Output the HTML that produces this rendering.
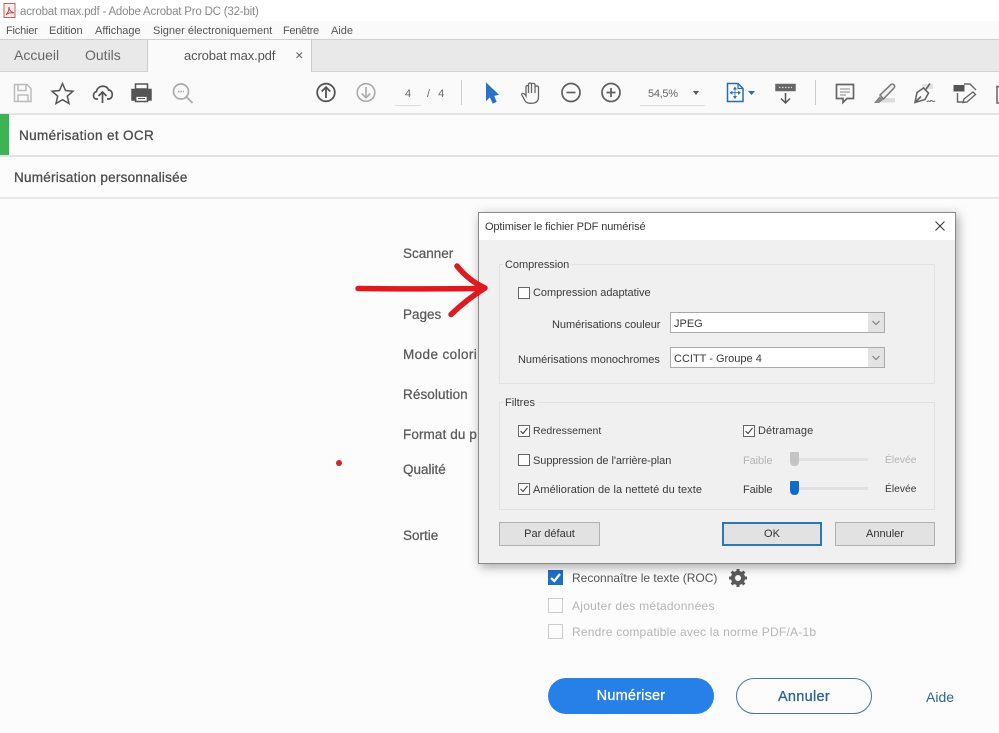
<!DOCTYPE html>
<html><head><meta charset="utf-8"><style>
html,body{margin:0;padding:0;width:999px;height:733px;overflow:hidden;background:#fcfcfc}
body{position:relative;font-family:"Liberation Sans",sans-serif;color:#444}
.a{position:absolute}
.t{position:absolute;white-space:nowrap;line-height:16px;height:16px}
.m{font-size:11px;color:#555;top:23px}
.d{font-size:11px;color:#3a3a3a}
.l{font-size:13.500px;color:#5a5a5a;left:403px;-webkit-text-stroke:.25px #5a5a5a}
.cb{position:absolute;width:10px;height:10px;border:1px solid #666;background:#fdfdfd}
.sel{position:absolute;left:670px;width:213px;height:19px;border:1px solid #aaa;background:#fff}
.sel i{position:absolute;right:0;top:0;width:16px;height:19px;background:#e3e3e3}
.btn{position:absolute;top:522px;height:22px;width:99px;border:1px solid #b0b0b0;background:#e2e2e2;text-align:center;line-height:23px;font-size:11px;color:#333}
.s{font-size:13.500px;color:#4d4d4d;-webkit-text-stroke:.3px #4d4d4d;letter-spacing:.2px}
</style></head><body>
<!-- title bar -->
<div class="a" style="left:0;top:0;width:999px;height:21px;background:#fff"></div>
<svg class="a" style="left:3px;top:3px" width="13" height="15" viewBox="0 0 13 15"><path d="M1 .5H12V14.500H1Z" fill="#fbeeee" stroke="#c8605c"/><path d="M3 12C5 10 6 7 6 4C6 7 8 9 11 10C8 9.500 5 10 3 12Z" fill="none" stroke="#c0403c"/></svg>
<div class="t" style="left:20px;top:4px;font-size:11.500px;color:#8a8a8a;letter-spacing:-.2px">acrobat max.pdf - Adobe Acrobat Pro DC (32-bit)</div>
<!-- menu -->
<div class="a" style="left:0;top:21px;width:999px;height:18px;background:#fafafa"></div>
<div class="t m" style="left:6px;letter-spacing:-.2px">Fichier</div>
<div class="t m" style="left:49px">Edition</div>
<div class="t m" style="left:95px">Affichage</div>
<div class="t m" style="left:153px">Signer électroniquement</div>
<div class="t m" style="left:283px;letter-spacing:-.3px">Fenêtre</div>
<div class="t m" style="left:331px">Aide</div>
<!-- tabs -->
<div class="a" style="left:0;top:39px;width:999px;height:33px;background:#e9e9e9;border-top:1px solid #cfcfcf;border-bottom:1px solid #d2d2d2;box-sizing:border-box"></div>
<div class="a" style="left:147px;top:40px;width:163px;height:32px;background:#fafafa;border-left:1px solid #ccc;border-right:1px solid #ccc"></div>
<div class="t" style="left:14px;top:47px;font-size:14px;color:#666">Accueil</div>
<div class="t" style="left:85px;top:47px;font-size:14px;color:#666">Outils</div>
<div class="t" style="left:184px;top:48px;font-size:13px;color:#555;letter-spacing:-.13px">acrobat max.pdf</div>
<svg class="a" style="left:295px;top:51px" width="9" height="9"><path d="M1.500 1.500L7 7M7 1.500L1.500 7" stroke="#666" stroke-width="1.100"/></svg>
<!-- toolbar -->
<div class="a" style="left:0;top:72px;width:999px;height:41px;background:#fafafa"></div>
<div class="a" style="left:0;top:113px;width:999px;height:2px;background:#e4e4e4"></div>
<svg class="a" style="left:0;top:72px" width="999" height="41" fill="none" stroke="#666" stroke-width="1.500">
<!-- save -->
<g stroke="#bbb"><path d="M14.500 12.500H27L31 16.500V29.500H14.500Z"/><path d="M18 12.500V18.500H26V12.500M18 29.500V23H28V29.500"/></g>
<!-- star -->
<path d="M62.500 11.500L65.500 18.500L73 19.200L67.300 24.200L69 31.500L62.500 27.700L56 31.500L57.700 24.200L52 19.200L59.500 18.500Z" stroke="#555"/>
<!-- cloud -->
<path d="M98 27H96.500C92.500 27 92.500 20.500 96.500 19.500C97.500 13 107 12.500 108.500 18C113.500 18 113.500 27 108.500 27H107M102.500 31V20M98.500 24L102.500 20L106.500 24" stroke="#555" stroke-width="1.700"/>
<!-- print -->
<path d="M135.500 12H147.500V17H135.500Z" stroke="#555"/><path d="M132 17.500H151V28H147.500V24H135.500V28H132Z" fill="#555" stroke="#555"/><path d="M135.500 24H147.500V29.500H135.500Z" stroke="#555"/><path d="M138 26.500H145" stroke="#555" stroke-width="1"/>
<!-- search -->
<g stroke="#aaa" stroke-width="1.700"><circle cx="181" cy="19.500" r="7.500"/><path d="M186.500 25L192.500 31"/><path d="M178 19.500H184" stroke-dasharray="1.500 1"/></g>
<!-- up/down -->
<g stroke="#555" stroke-width="1.800"><circle cx="326" cy="20.500" r="8.800"/><path d="M326 26V15.500M321.700 19.500L326 15.200L330.300 19.500"/></g>
<g stroke="#aaa" stroke-width="1.600"><circle cx="366" cy="20.500" r="8.800"/><path d="M366 15V25.500M361.700 21.500L366 25.800L370.300 21.500"/></g>
<path d="M395 33.500H421" stroke="#ddd" stroke-width="1"/>
<path d="M461.500 8V33" stroke="#ccc" stroke-width="1"/>
<!-- cursor -->
<path d="M486.500 11.500V28L490 24.500L493 31L496 29.500L493.500 23.500L498 22.500Z" fill="#2a72c4" stroke="#2a72c4" stroke-width="1"/>
<!-- hand -->
<path d="M526 30C524 28 524 26 522 23.500C521 21.500 523 20.500 525 22.500L526 24V15C526 13 528.500 13 528.500 15V21V12.500C528.500 10.500 531.500 10.500 531.500 12.500V21V12.500C531.500 11 535 11 535 12.500V21V15C535 13.500 538.500 13.500 538.500 15.500V25C538.500 29 536.500 30.500 534 31C531 31.500 528 31.500 526 30Z" stroke="#666" stroke-width="1.300"/>
<!-- minus/plus -->
<g stroke="#5f5f5f" stroke-width="1.700"><circle cx="571" cy="20.500" r="9"/><path d="M566.500 20.500H575.500"/><circle cx="611" cy="20.500" r="9"/><path d="M606.500 20.500H615.500M611 16V25"/></g>
<path d="M640 33.500H705" stroke="#ddd" stroke-width="1"/>
<path d="M693 19H699L696 23Z" fill="#555" stroke="none"/>
<!-- fit -->
<path d="M727.500 11.500H738L743 16.500V29.500H727.500Z" stroke="#2a6cb0" stroke-width="1.500"/><path d="M738 11.500V16.500H743" stroke="#2a6cb0" stroke-width="1.200"/>
<path d="M735 14.500L737 17.500H733ZM735 27L737 24H733ZM729.500 20.700L732.500 18.700V22.700ZM741 20.700L738 18.700V22.700Z" fill="#2a6cb0" stroke="none"/>
<path d="M735 17.500V24M732.500 20.700H738" stroke="#2a6cb0" stroke-width=".8"/>
<path d="M748 19H755L751.500 23Z" fill="#2a6cb0" stroke="none"/>
<!-- stamp -->
<path d="M776 12.500H795V18.500H776Z" fill="#666" stroke="#666"/><path d="M779 15.500H792" stroke="#ddd" stroke-width="1.300" stroke-dasharray="1.500 1.500"/><path d="M785.500 21V30.500M781 26.500L785.500 31L790 26.500" stroke="#555"/>
<path d="M815.500 8V33" stroke="#ccc" stroke-width="1"/>
<!-- comment -->
<path d="M836.500 12.500H853.500V26.500H847L843 30.500V26.500H836.500Z" stroke="#666" stroke-width="1.700"/><path d="M840 17H850M840 20H850M840 23H846" stroke="#888" stroke-width="1"/>
<!-- highlight -->
<path d="M881 26H895V30.500H881Z" fill="#ddd" stroke="none"/><path d="M880 23L891 12.500C893 11 896 14 894 16L883.500 27Z" stroke="#777" fill="#f0f0f0"/><path d="M875 30.500L879.500 25L882.500 27.500L879 30.500Z" fill="#888" stroke="#888" stroke-width="1"/>
<!-- sign -->
<path d="M922 12H933V17H922Z" fill="#e3e3e3" stroke="none"/><path d="M915 30.500L917 20.500L923.500 16L928.500 21L925 27.500ZM930 11.500L925.500 18M915.500 30L921 24.500" stroke="#666" stroke-width="1.600"/><path d="M927 30C928.500 27 929.500 31 930.500 29C931.500 27 932.500 31 935 29" stroke="#666" stroke-width="1"/>
<!-- edit -->
<path d="M964 12H970L976 18M957.500 21V30H963" stroke="#666" stroke-width="1.400"/><path d="M954 13.500H964V19H954Z" fill="#555" stroke="#555" stroke-width="1"/><path d="M963 30.500L964 27L973 20L975.500 22.500L967 30Z" stroke="#666" stroke-width="1.400"/>
<!-- trash cut off -->
<path d="M996 14.500H999M997 15V31H999" stroke="#666"/>
</svg>
<div class="t" style="left:405px;top:86px;font-size:11px;color:#666">4</div>
<div class="t" style="left:427px;top:86px;font-size:11px;color:#666;word-spacing:5px">/ 4</div>
<div class="t" style="left:648px;top:86px;font-size:11px;color:#666;letter-spacing:-.3px">54,5%</div>
<!-- sections -->
<div class="a" style="left:0;top:114px;width:9px;height:42px;background:#3cb454"></div>
<div class="t s" style="left:19px;top:128px;letter-spacing:.36px">Numérisation et OCR</div>
<div class="a" style="left:0;top:155px;width:999px;height:2px;background:#e2e2e2"></div>
<div class="t s" style="left:14px;top:170px;letter-spacing:.24px">Numérisation personnalisée</div>
<div class="a" style="left:0;top:197px;width:999px;height:2px;background:#e6e6e6"></div>
<!-- form labels -->
<div class="t l" style="top:246px">Scanner</div>
<div class="t l" style="top:307px">Pages</div>
<div class="t l" style="top:347px;letter-spacing:.4px">Mode colori</div>
<div class="t l" style="top:387px;letter-spacing:.1px">Résolution</div>
<div class="t l" style="top:427px;letter-spacing:.1px">Format du p</div>
<div class="t l" style="top:462px">Qualité</div>
<div class="t l" style="top:528px">Sortie</div>
<div class="a" style="left:336px;top:460px;width:6px;height:6px;border-radius:50%;background:#d92020"></div>
<!-- bottom controls -->
<div class="a" style="left:548px;top:570px;width:15px;height:15px;background:#1f6fc6"></div>
<svg class="a" style="left:548px;top:570px" width="15" height="15"><path d="M3 8L6.300 11L12 4" fill="none" stroke="#fff" stroke-width="2.200"/></svg>
<div class="t" style="left:572px;top:570px;font-size:12px;color:#555">Reconnaître le texte (ROC)</div>
<svg class="a" style="left:728px;top:568px" width="20" height="20" viewBox="0 0 20 20"><circle cx="10" cy="10" r="5.300" fill="none" stroke="#5c5c5c" stroke-width="3.600"/><path d="M10 1V19M1 10H19M3.600 3.600L16.400 16.400M16.400 3.600L3.600 16.400" stroke="#5c5c5c" stroke-width="3"/><circle cx="10" cy="10" r="3" fill="#fcfcfc"/></svg>
<div class="a" style="left:548px;top:598px;width:13px;height:13px;border:1px solid #ccc"></div>
<div class="t" style="left:572px;top:598px;font-size:12px;color:#b5b5b5;letter-spacing:.26px">Ajouter des métadonnées</div>
<div class="a" style="left:548px;top:624px;width:13px;height:13px;border:1px solid #ccc"></div>
<div class="t" style="left:572px;top:624px;font-size:12px;color:#b5b5b5;letter-spacing:.22px">Rendre compatible avec la norme PDF/A-1b</div>
<div class="a" style="left:548px;top:678px;width:166px;height:36px;border-radius:18px;background:#2680e8;color:#fff;text-align:center;line-height:37px;font-size:14.500px;-webkit-text-stroke:.3px #fff;letter-spacing:.2px">Numériser</div>
<div class="a" style="left:736px;top:678px;width:134px;height:34px;border-radius:18px;border:1px solid #4a7396;color:#2f6494;text-align:center;line-height:36px;font-size:14.500px;-webkit-text-stroke:.3px #2f6494;background:#fcfcfc;letter-spacing:.3px">Annuler</div>
<div class="t" style="left:926px;top:689px;font-size:14px;color:#2f6494">Aide</div>
<!-- dialog -->
<div class="a" style="left:478px;top:212px;width:476px;height:350px;background:#f0f0f0;border:1px solid #8a8a8a;box-shadow:2px 3px 10px rgba(0,0,0,.35)"></div>
<div class="a" style="left:479px;top:213px;width:476px;height:27px;background:#fff"></div>
<div class="t d" style="left:485px;top:219px;letter-spacing:-.12px">Optimiser le fichier PDF numérisé</div>
<svg class="a" style="left:935px;top:221px" width="10" height="10"><path d="M.500.500L9.500 9.500M9.500.500L.500 9.500" stroke="#333" stroke-width="1"/></svg>
<div class="a" style="left:499px;top:264px;width:434px;height:118px;border:1px solid #e2e2e2"></div>
<div class="t d" style="left:503px;top:257px;background:#f0f0f0;padding:0 2px;letter-spacing:-.05px">Compression</div>
<div class="cb" style="left:518px;top:287px"></div>
<div class="t d" style="left:533px;top:285px;letter-spacing:-.05px">Compression adaptative</div>
<div class="t d" style="left:552px;top:317px;letter-spacing:-.05px">Numérisations couleur</div>
<div class="t d" style="left:518px;top:352px;letter-spacing:-.05px">Numérisations monochromes</div>
<div class="sel" style="top:312px"><i></i><svg class="a" style="right:4px;top:7px" width="8" height="6"><path d="M.500 1L4 4.500L7.500 1" fill="none" stroke="#777"/></svg></div>
<div class="t d" style="left:674px;top:316px">JPEG</div>
<div class="sel" style="top:347px"><i></i><svg class="a" style="right:4px;top:7px" width="8" height="6"><path d="M.500 1L4 4.500L7.500 1" fill="none" stroke="#777"/></svg></div>
<div class="t d" style="left:674px;top:351px">CCITT - Groupe 4</div>
<div class="a" style="left:499px;top:402px;width:434px;height:106px;border:1px solid #e2e2e2"></div>
<div class="t d" style="left:503px;top:395px;background:#f0f0f0;padding:0 2px">Filtres</div>
<div class="cb" style="left:518px;top:425px"><svg width="10" height="10" style="display:block"><path d="M1.500 5L4 7.500L8.500 2" fill="none" stroke="#444" stroke-width="1.100"/></svg></div>
<div class="t" style="left:533px;top:423px;font-size:10.500px;color:#3a3a3a">Redressement</div>
<div class="cb" style="left:743px;top:425px"><svg width="10" height="10" style="display:block"><path d="M1.500 5L4 7.500L8.500 2" fill="none" stroke="#444" stroke-width="1.100"/></svg></div>
<div class="t d" style="left:758px;top:423px;letter-spacing:.1px">Détramage</div>
<div class="cb" style="left:518px;top:454px"></div>
<div class="t d" style="left:533px;top:453px;letter-spacing:-.07px">Suppression de l'arrière-plan</div>
<div class="t d" style="left:743px;top:453px;color:#b5b5b5;letter-spacing:-.1px">Faible</div>
<div class="a" style="left:796px;top:458px;width:72px;height:3px;background:#e3e3e3"></div>
<svg class="a" style="left:790px;top:452px" width="9" height="14"><path d="M0 1Q0 0 1 0H8Q9 0 9 1V9Q9 14 4.500 14Q0 14 0 9Z" fill="#c4c4c4"/></svg>
<div class="t" style="left:885px;top:453px;font-size:10.300px;color:#b5b5b5">Élevée</div>
<div class="cb" style="left:518px;top:483px"><svg width="10" height="10" style="display:block"><path d="M1.500 5L4 7.500L8.500 2" fill="none" stroke="#444" stroke-width="1.100"/></svg></div>
<div class="t d" style="left:533px;top:482px;letter-spacing:.06px">Amélioration de la netteté du texte</div>
<div class="t d" style="left:743px;top:482px;letter-spacing:-.1px">Faible</div>
<div class="a" style="left:796px;top:487px;width:72px;height:3px;background:#e0e0e0"></div>
<svg class="a" style="left:790px;top:481px" width="9" height="14"><path d="M0 1Q0 0 1 0H8Q9 0 9 1V9Q9 14 4.500 14Q0 14 0 9Z" fill="#0d6cc9"/></svg>
<div class="t" style="left:885px;top:482px;font-size:10.300px;color:#3a3a3a">Élevée</div>
<div class="btn" style="left:499px">Par défaut</div>
<div class="btn" style="left:722px;border:2px solid #2a78b8;width:96px;height:20px;line-height:21px">OK</div>
<div class="btn" style="left:835px;width:98px">Annuler</div>
<!-- red arrow -->
<svg class="a" style="left:0;top:0;pointer-events:none" width="999" height="733" fill="none" stroke="#e0191f" stroke-linecap="round" stroke-linejoin="round"><path d="M358 288.500C400 289 445 289 484 288.500" stroke-width="5.500"/><path d="M457 266C465 276 474 283 485 288C472 296 462 304 451 314.500" stroke-width="5.500"/></svg>
</body></html>
